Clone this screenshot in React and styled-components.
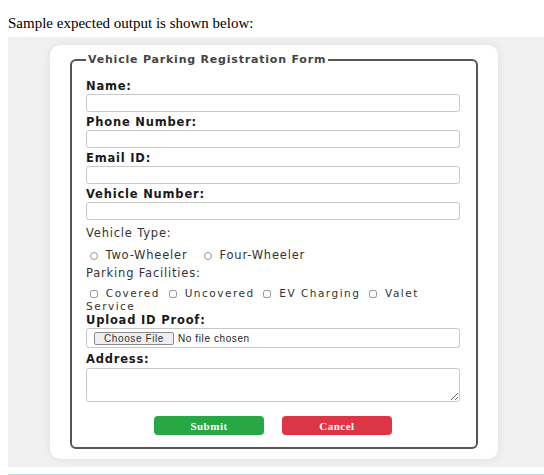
import React from 'react'
import styled, { createGlobalStyle } from 'styled-components'

const GlobalStyle = createGlobalStyle`
  html {
    overflow: hidden;
  }
  body {
    margin: 8px 0 0 8px;
    font-family: "Liberation Serif", "Times New Roman", serif;
    background: #fff;
  }
`

const Intro = styled.div`
  font-size: 15px;
  line-height: 18px;
  color: #000;
  margin: 6px 0 5px;
`

const Stage = styled.div`
  background: #f0f0f0;
  padding: 8px 0 8px 42px;
`

const Card = styled.div`
  width: 448px;
  box-sizing: border-box;
  background: #fff;
  border-radius: 10px;
  box-shadow: 0 0 8px rgba(0, 0, 0, 0.08);
  padding: 8px 20px 10px;
  font-family: "DejaVu Sans", Verdana, sans-serif;
  letter-spacing: 0.8px;
`

const Fieldset = styled.fieldset`
  margin: 0;
  border: 2px solid #555;
  border-radius: 6px;
  padding: 13px 16px 12px 14px;
`

const Legend = styled.legend`
  font-size: 11px;
  font-weight: bold;
  line-height: 14px;
  color: #444;
  padding: 0 2px;
`

const Label = styled.label`
  display: block;
  font-size: 11.5px;
  line-height: 12px;
  color: ${p => (p.$bold ? '#1a1a1a' : '#333')};
  font-weight: ${p => (p.$bold ? 'bold' : 'normal')};
  margin-top: ${p => p.$mt || 0}px;
  margin-bottom: ${p => p.$mb ?? 2}px;
`

const TextInput = styled.input`
  display: block;
  width: 100%;
  box-sizing: border-box;
  height: 18px;
  border: 1px solid #c8c8c8;
  border-radius: 3px;
  margin: 0 0 4px;
  padding: 0 4px;
`

const OptionRow = styled.div`
  font-size: ${p => p.$fs || 11.5}px;
  line-height: ${p => p.$lh || 12}px;
  letter-spacing: ${p => p.$ls || 0.8}px;
  color: #333;
  margin-top: ${p => p.$mt || 0}px;
`

const Option = styled.label`
  margin-right: ${p => p.$gap || 0}px;
`

const Radio = styled.input`
  width: 8px;
  height: 8px;
  margin: 0 3px 0 4px;
  vertical-align: -1px;
  accent-color: #999;
  opacity: 0.75;
`

const Check = styled.input`
  width: 8px;
  height: 8px;
  margin: 0 3px 0 4px;
  vertical-align: -1px;
  opacity: 0.8;
`

const FileBox = styled.div`
  border: 1px solid #c8c8c8;
  border-radius: 3px;
  height: 20px;
  box-sizing: border-box;
  display: flex;
  align-items: center;
  padding: 0 7px;
  margin-top: 2px;

  input {
    font-family: "Liberation Sans", Arial, sans-serif;
    font-size: 10px;
    letter-spacing: 0.6px;
    color: #222;
  }
  input::file-selector-button {
    font-family: "Liberation Sans", Arial, sans-serif;
    font-size: 10px;
    letter-spacing: 0.6px;
    height: 13px;
    width: 80px;
    padding: 0;
    margin-right: 4px;
    background: #efefef;
    border: 1px solid #8a8a8a;
    border-radius: 2px;
    color: #333;
  }
`

const TextArea = styled.textarea`
  display: block;
  width: 100%;
  box-sizing: border-box;
  height: 34px;
  border: 1px solid #c8c8c8;
  border-radius: 3px;
  margin-top: 3px;
  resize: vertical;
`

const Actions = styled.div`
  display: flex;
  justify-content: center;
  gap: 18px;
  margin-top: 14px;
`

const Button = styled.button`
  width: 110px;
  height: 19px;
  border: none;
  border-radius: 4px;
  background: ${p => p.$bg};
  color: #fff;
  font-family: "Liberation Serif", "Times New Roman", serif;
  font-weight: bold;
  font-size: 11px;
  letter-spacing: 0.5px;
  padding: 0;
`

const BottomRule = styled.div`
  margin: 7px 0 0 -8px;
  border-top: 1px solid #c5d6f2;
`

export default function App() {
  return (
    <>
      <GlobalStyle />
      <Intro>Sample expected output is shown below:</Intro>
      <Stage>
        <Card>
          <form onSubmit={e => e.preventDefault()}>
            <Fieldset>
              <Legend>Vehicle Parking Registration Form</Legend>

              <Label $bold>Name:</Label>
              <TextInput type="text" />
              <Label $bold>Phone Number:</Label>
              <TextInput type="text" />
              <Label $bold>Email ID:</Label>
              <TextInput type="email" />
              <Label $bold>Vehicle Number:</Label>
              <TextInput type="text" />

              <Label $mt={7} $mb={0}>Vehicle Type:</Label>
              <OptionRow $mt={10}>
                <Option $gap={8}><Radio type="radio" name="vtype" /> Two-Wheeler</Option>{' '}
                <Option><Radio type="radio" name="vtype" /> Four-Wheeler</Option>
              </OptionRow>

              <Label $mt={6} $mb={0}>Parking Facilities:</Label>
              <OptionRow $mt={8} $fs={10.5} $lh={12.5} $ls={1.5}>
                <Option><Check type="checkbox" /> Covered</Option>{' '}
                <Option><Check type="checkbox" /> Uncovered</Option>{' '}
                <Option><Check type="checkbox" /> EV Charging</Option>{' '}
                <Option><Check type="checkbox" id="valet" /> Valet</Option>{' '}
                <Option htmlFor="valet">Service</Option>
              </OptionRow>

              <Label $bold $mt={2} $mb={0}>Upload ID Proof:</Label>
              <FileBox>
                <input type="file" />
              </FileBox>

              <Label $bold $mt={5} $mb={0}>Address:</Label>
              <TextArea />

              <Actions>
                <Button type="submit" $bg="#28a745">Submit</Button>
                <Button type="button" $bg="#dc3545">Cancel</Button>
              </Actions>
            </Fieldset>
          </form>
        </Card>
      </Stage>
      <BottomRule />
    </>
  )
}
